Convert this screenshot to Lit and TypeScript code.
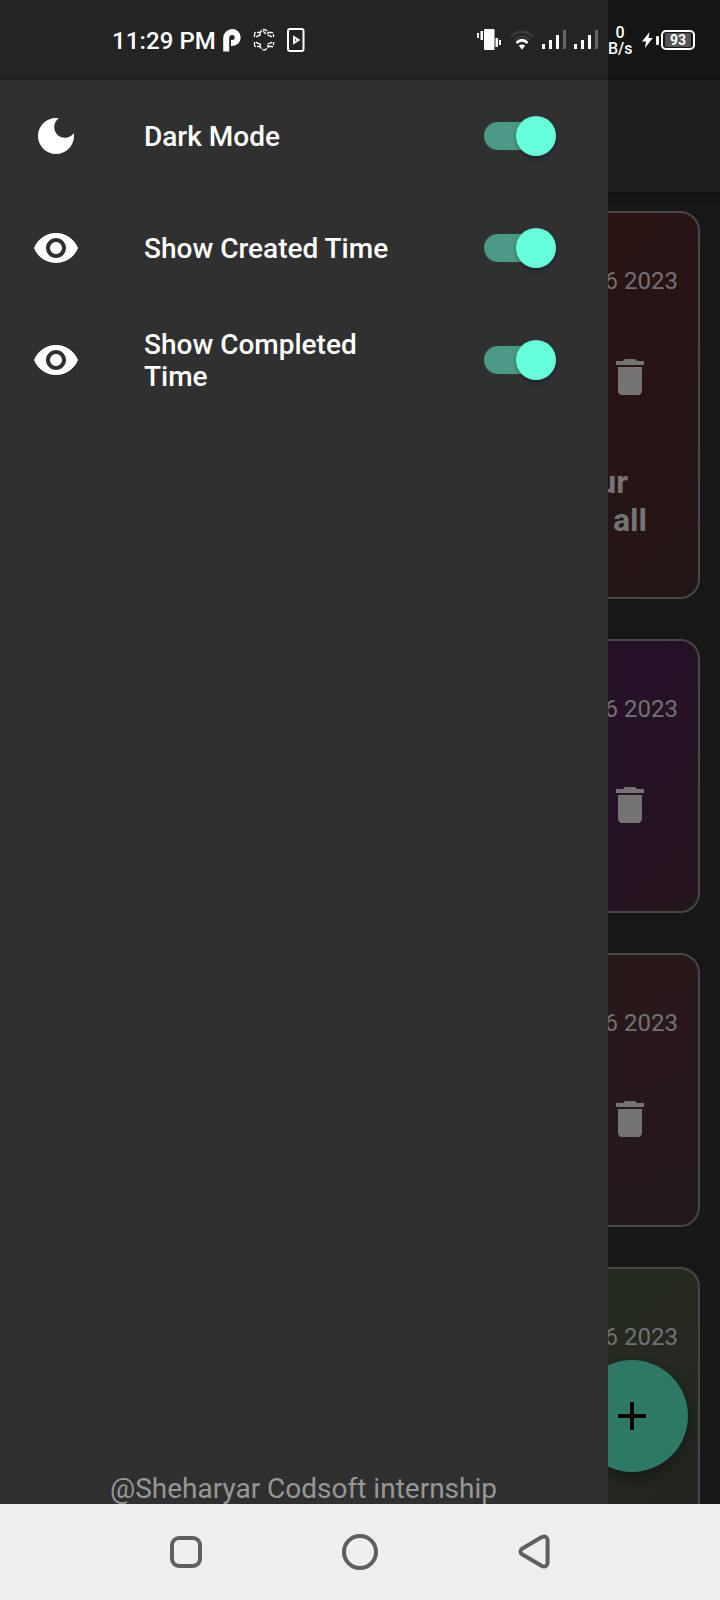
import { LitElement, html, css, svg } from "lit";
import { customElement, property } from "lit/decorators.js";

@customElement("status-bar")
class StatusBar extends LitElement {
  static styles = css`
    :host {
      display: flex;
      align-items: center;
      height: 80px;
      padding: 0 25px 0 112px;
      box-sizing: border-box;
      color: #fff;
      font-family: Roboto, sans-serif;
      background: linear-gradient(90deg, #242424 608px, #151515 608px);
    }
    svg { display: block; flex: none; }
    .time { font-size: 24px; line-height: 28px; font-weight: 500; white-space: nowrap; width: 110px; letter-spacing: .1px; padding-top: 1px; }
    .left { display: flex; align-items: center; gap: 12px; }
    .right { display: flex; align-items: center; margin-left: auto; }
    .wifi { margin-left: 9px; }
    .sig { margin-left: 8px; }
    .rate { margin-left: 10px; width: 24px; font-size: 16px; line-height: 16px; font-weight: 500; text-align: center; padding-top: 2px; }
    .bolt { margin-left: 10px; }
    .nub { width: 3px; height: 9px; border-radius: 1px; background: #fff; margin: 0 2px 0 3px; }
    .batt {
      width: 34px; height: 20px; box-sizing: border-box; border: 2px solid #fff; border-radius: 5px;
      display: flex; align-items: center; justify-content: center; padding: 1px;
    }
    .level { background: #555; width: 26px; height: 14px; border-radius: 1px; text-align: center; font-size: 14px; line-height: 14px; font-weight: 700; }
  `;
  signal() {
    return html`<svg class="sig" width="24" height="20" viewBox="0 0 24 20" fill="#fff">
      <rect y="14" width="3" height="5"/><rect x="7" y="10" width="3" height="9"/>
      <rect x="14" y="5" width="3" height="14"/><rect x="21" width="3" height="19" fill="#666"/></svg>`;
  }
  render() {
    return html`
      <span class="time">11:29 PM</span>
      <div class="left">
        <svg width="19" height="24" viewBox="0 0 19 24" fill="none" stroke="#fff" stroke-width="6">
          <path d="M4.200 23.500V10A6 6 0 0 1 10.200 4A5.400 5.400 0 0 1 10.200 15H9"/></svg>
        <svg width="22" height="24" viewBox="0 0 22 24" fill="none" stroke="#fff" stroke-width="1.300" stroke-dasharray="5 1.200">
          <path d="M1.500 9V6Q1.500 4.500 3 4.500H7M15 4.500H19Q20.500 4.500 20.500 6V9M1.500 14V17Q1.500 18.500 3 18.500H7M15 18.500H19Q20.500 18.500 20.500 17V14"/>
          <path d="M7 7C7 3 9 1.500 11 1.500S15 3 15 6M7 16C7 20 9 22 11 22S15 20 15 17M10 3L13 6"/>
          <path d="M3 9Q5 7.500 8 7M19 9Q17 7.500 14 7M3 14Q5 16 9 16M19 14Q17 16 13 16"/></svg>
        <svg width="18" height="24" viewBox="0 0 18 24" fill="none" stroke="#fff" stroke-width="2">
          <rect x="1" y="1" width="15.500" height="22" rx="2"/><path d="M7 9V15L11.500 12Z"/></svg>
      </div>
      <div class="right">
        <svg width="24" height="24" viewBox="0 0 24 24" fill="#fff">
          <rect x="7" y="1" width="10.500" height="21" rx="1"/>
          <rect x="0" y="5" width="2" height="5"/><rect x="3.500" y="3" width="2.500" height="9"/>
          <rect x="18.500" y="10" width="2.500" height="9"/><rect x="22" y="12" width="2" height="5"/></svg>
        <svg class="wifi" width="24" height="22" viewBox="0 0 24 22" fill="none" stroke-width="2.600">
          <path d="M1 7.500Q12-2 23 7.500" stroke="#3c3c3c"/><path d="M4.500 11Q12 4 19.500 11" stroke="#383838"/>
          <path d="M6.500 14Q12 8.500 17.500 14" stroke="#fff"/><path d="M8.800 16.800Q12 14 15.200 16.800L12 20.500Z" fill="#fff"/></svg>
        ${this.signal()}${this.signal()}
        <div class="rate">0<br>B/s</div>
        <svg class="bolt" width="11" height="18" viewBox="0 0 11 18" fill="#fff"><path d="M7.500 1L0 10.500H4L3 17L10.800 7H6.500Z"/></svg>
        <i class="nub"></i>
        <div class="batt"><div class="level">93</div></div>
      </div>`;
  }
}

@customElement("setting-row")
class SettingRow extends LitElement {
  @property() label = "";
  @property() icon = "eye";
  static styles = css`
    :host { display: grid; grid-template-columns: 48px 264px 72px; column-gap: 64px; align-items: center; height: 112px; padding-left: 32px; }
    .icon { display: block; fill: #fff; }
    .label { color: #fff; font: 500 28px/32px Roboto, sans-serif; padding-top: 1px; }
    .switch { display: flex; align-items: center; width: 68px; height: 28px; box-sizing: border-box; margin-left: 12px; padding-left: 32px; border-radius: 14px; background: #4b9a87; }
    .thumb { flex: none; width: 40px; height: 40px; border-radius: 50%; background: #64ffda; box-shadow: 0 2px 4px rgba(0, 0, 0, .35); }
  `;
  render() {
    const shape = this.icon === "moon"
      ? svg`<path d="M12 3c-4.970 0-9 4.030-9 9s4.030 9 9 9 9-4.030 9-9c0-.46-.04-.92-.1-1.360-.98 1.370-2.580 2.260-4.400 2.260-2.980 0-5.400-2.420-5.400-5.400 0-1.810.89-3.420 2.260-4.400C12.920 3.040 12.460 3 12 3z"/>`
      : svg`<path d="M12 4.500C7 4.500 2.730 7.610 1 12c1.730 4.390 6 7.500 11 7.500s9.270-3.110 11-7.500c-1.730-4.390-6-7.500-11-7.500zM12 17c-2.760 0-5-2.240-5-5s2.240-5 5-5 5 2.240 5 5-2.240 5-5 5zm0-8c-1.660 0-3 1.340-3 3s1.340 3 3 3 3-1.340 3-3-1.340-3-3-3z"/>`;
    return html`<svg class="icon" width="48" height="48" viewBox="0 0 24 24">${shape}</svg>
      <div class="label">${this.label}</div>
      <div class="switch"><div class="thumb"></div></div>`;
  }
}

@customElement("app-root")
class AppRoot extends LitElement {
  static styles = css`
    :host { display: flex; flex-direction: column; position: relative; width: 720px; height: 1600px; overflow: hidden; background: #171717; font-family: Roboto, sans-serif; }
    status-bar { flex: none; }
    .appbar { flex: none; height: 112px; background: #1f1f1f; box-shadow: 0 2px 8px rgba(0, 0, 0, .4); }
    .list { flex: 1; min-height: 0; overflow: hidden; display: flex; flex-direction: column; gap: 40px; padding: 19px 20px 0; }
    .card { flex: none; height: 274px; box-sizing: border-box; border: 2px solid #474545; border-radius: 20px; display: flex; flex-direction: column; align-items: flex-end; color: #757373; }
    .card.tall { height: 388px; }
    .red { background: linear-gradient(135deg, #321010, #281415 70%, #221716); }
    .purple { background: linear-gradient(135deg, #280e2a, #251225 80%, #24161d); }
    .rose { background: linear-gradient(160deg, #2d1a16, #27181b 60%, #22181b); }
    .green { background: linear-gradient(135deg, #2a3022, #252a21 70%, #20231e); }
    .date { font-size: 24px; line-height: 28px; padding: 54px 20px 0 0; color: #737171; }
    .trash { fill: #757373; margin: 58px 44px 0 0; display: block; }
    .title { font-size: 32px; line-height: 38px; font-weight: 700; margin-top: 62px; text-align: right; padding-right: 51px; }
    .first { padding-right: 19px; }
    .drawer { position: absolute; left: 0; top: 80px; width: 608px; height: 1424px; background: #303030; display: flex; flex-direction: column; overflow: hidden; }
    .credit { margin: auto 1px -1px 0; text-align: center; font-size: 28px; line-height: 32px; color: #979797; }
    .fab { position: absolute; left: 576px; top: 1360px; width: 112px; height: 112px; border-radius: 50%; background: #2e7866; display: flex; align-items: center; justify-content: center; box-shadow: 0 6px 12px rgba(0, 0, 0, .3); }
    .nav { flex: none; height: 96px; background: #efefef; display: flex; justify-content: center; gap: 134px; align-items: center; z-index: 1; }
    .nav svg { fill: none; stroke: #5f5f5f; stroke-width: 4; stroke-linejoin: round; }
  `;
  card(kind: string, lines: string[] = []) {
    return html`<div class="card ${kind}">
      <div class="date">6 2023</div>
      <svg class="trash" width="48" height="48" viewBox="0 0 24 24"><path d="M6 19c0 1.100.9 2 2 2h8c1.100 0 2-.9 2-2V7H6v12zM19 4h-3.500l-1-1h-5l-1 1H5v2h14V4z"/></svg>
      ${lines.length ? html`<div class="title"><div class="first">${lines[0]}</div><div>${lines[1]}</div></div>` : ""}
    </div>`;
  }
  render() {
    return html`
      <status-bar></status-bar>
      <div class="appbar"></div>
      <div class="list">
        ${this.card("tall red", ["ur", "all"])}
        ${this.card("purple")}
        ${this.card("rose")}
        ${this.card("green")}
      </div>
      <div class="fab"><svg width="28" height="28" viewBox="0 0 28 28"><path d="M12 0h4v12h12v4H16v12h-4V16H0v-4h12z"/></svg></div>
      <div class="drawer">
        <setting-row icon="moon" label="Dark Mode"></setting-row>
        <setting-row label="Show Created Time"></setting-row>
        <setting-row label="Show Completed Time"></setting-row>
        <div class="credit">@Sheharyar Codsoft internship</div>
      </div>
      <div class="nav">
        <svg width="40" height="40" viewBox="0 0 40 40"><rect x="6" y="6" width="28" height="28" rx="7"/></svg>
        <svg width="40" height="40" viewBox="0 0 40 40"><circle cx="20" cy="20" r="16"/></svg>
        <svg width="40" height="40" viewBox="0 0 40 40"><path d="M8 16.700L27.500 5.300Q32.700 2.800 33.600 8V31Q32.700 36.200 27.500 33.700L8 22.300Q4.800 19.500 8 16.700Z"/></svg>
      </div>`;
  }
}
